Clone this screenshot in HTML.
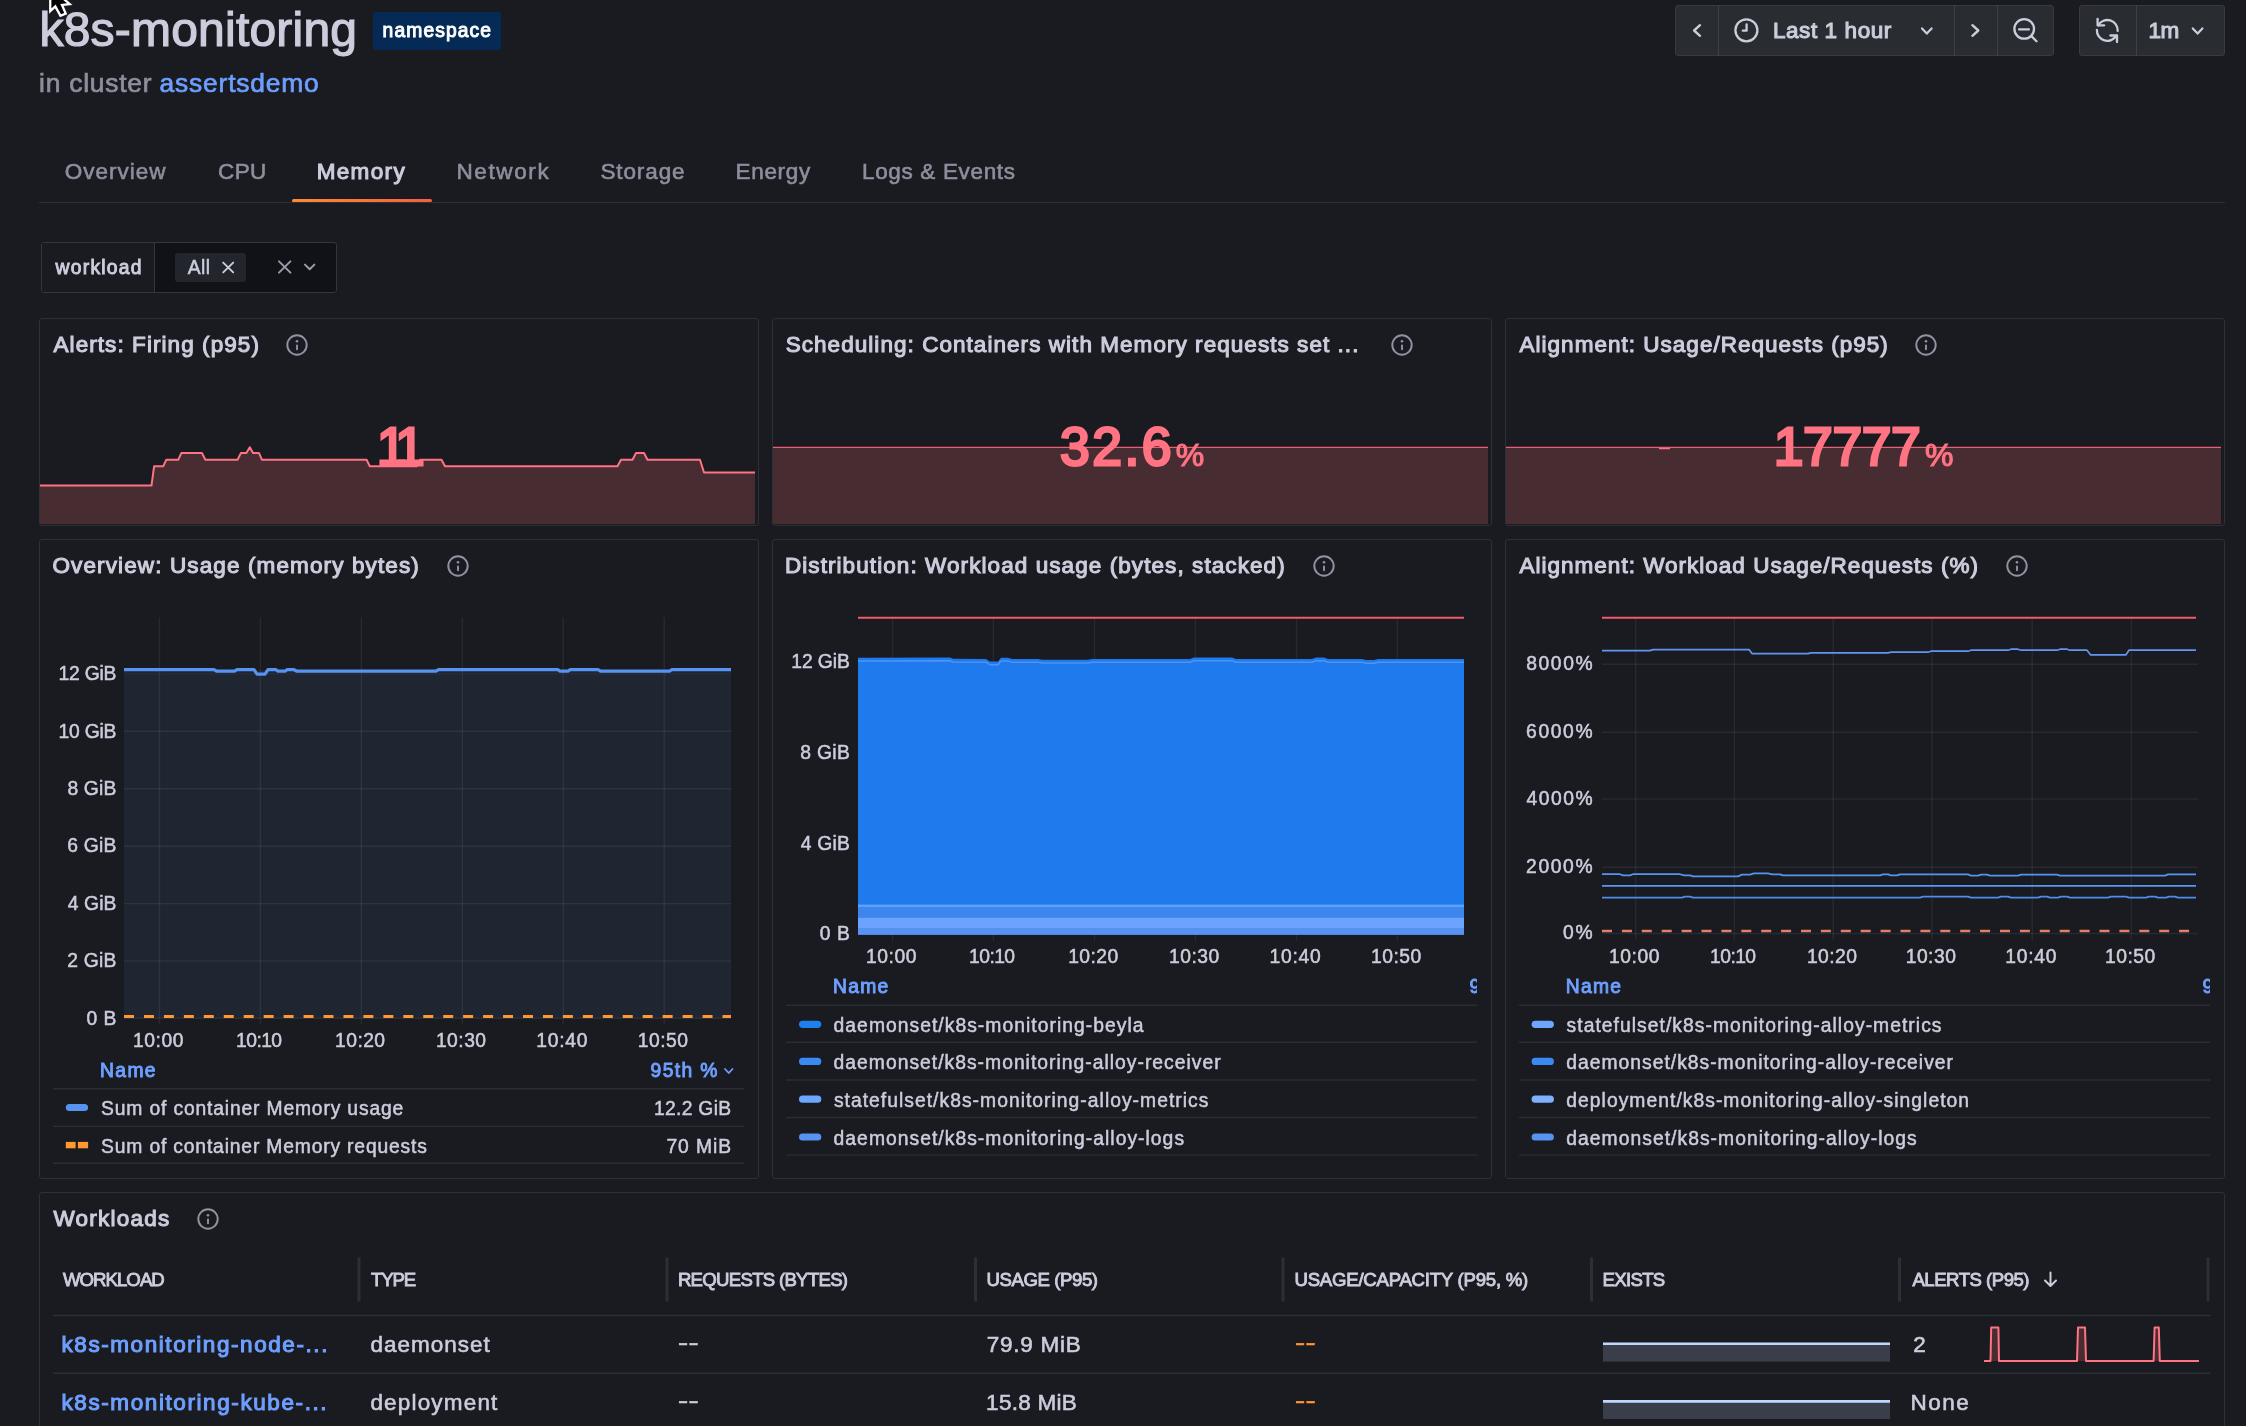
<!DOCTYPE html>
<html lang="en"><head><meta charset="utf-8"><title>k8s-monitoring - Memory</title>
<style>
*{box-sizing:border-box;margin:0;padding:0}
html,body{width:2246px;height:1426px;overflow:hidden;background:#191b20}
body{font-family:"Liberation Sans", sans-serif;color:#ccccdc;position:relative}
#app{position:absolute;left:0;top:0;width:2246px;height:1426px;will-change:transform}
.t{position:absolute;white-space:pre;line-height:1;display:block;-webkit-text-stroke:0.026em currentColor}
.m{-webkit-text-stroke:0.048em currentColor}
.ic{position:absolute;overflow:visible;display:block}
.abs{position:absolute}
.panel{position:absolute;border:1px solid #2e3036;border-radius:3px;background:#191b20;overflow:hidden}
.panel>svg.plot{position:absolute;left:-1px;top:-1px;display:block}
.btn{position:absolute;background:#292c31;border:1px solid #34373d}
a{color:inherit;text-decoration:none}
</style></head>
<body><div id="app">
<header class="abs" style="left:0;top:0;width:2246px;height:120px">
<div class="abs" style="left:373px;top:12px;width:128px;height:38px;border-radius:3px;background:#042a55"></div>
<svg class="ic" style="left:44px;top:0" width="36" height="24" viewBox="44 0 36 24"><path id="cur" d="M51.4 -10.3L51.4 8.5L55.6 4.6L61 14.3L64.2 13L60.3 3.9L67 3.2Z" fill="#000" stroke="#fff" stroke-width="4.6" stroke-linejoin="miter" stroke-miterlimit="6"/><path d="M51.4 -10.3L51.4 8.5L55.6 4.6L61 14.3L64.2 13L60.3 3.9L67 3.2Z" fill="#000"/></svg>
<div class="btn" style="left:1675px;top:5px;width:379px;height:51px;border-radius:3px;background:#292c31;border-color:#373a40"></div>
<div class="abs" style="left:1718px;top:5px;width:1px;height:51px;background:#3d4046"></div>
<div class="abs" style="left:1954px;top:5px;width:1px;height:51px;background:#3d4046"></div>
<div class="abs" style="left:1997px;top:5px;width:1px;height:51px;background:#3d4046"></div>
<div class="btn" style="left:2079px;top:5px;width:146px;height:51px;border-radius:3px;background:#292c31;border-color:#373a40"></div>
<div class="abs" style="left:2136px;top:5px;width:1px;height:51px;background:#3d4046"></div>
<svg class="ic" style="left:1675px;top:5px" width="550" height="51" viewBox="1675 5 550 51" fill="none" stroke="#ccccdc" stroke-width="2.4" stroke-linecap="round" stroke-linejoin="round"><path d="M1700 25.2L1694.1 30.5L1700 35.8"/><path d="M1972.4 25.2L1978.3 30.5L1972.4 35.8"/><circle cx="1746.4" cy="30.3" r="11" stroke-width="2.3"/><path d="M1746.6 24.5V30.7H1742.8" stroke-width="2.3"/><path d="M1922 28.4L1926.8 33.6L1931.6 28.4" stroke-width="2.2"/><circle cx="2024.2" cy="28.9" r="9.8" stroke-width="2.3"/><path d="M2019.1 29.4H2028.9M2031.4 36.1L2036.5 41.2" stroke-width="2.3"/><path d="M2098.3 25.2A10.4 10.4 0 0 1 2117.7 30.9M2096.9 29.9A10.4 10.4 0 0 0 2116.3 35.6" stroke-width="2.3"/><path d="M2097.6 18.8V25.3H2104.2M2110.4 35.5H2117V42" stroke-width="2.3"/><path d="M2192.8 28.4L2197.6 33.6L2202.4 28.4" stroke-width="2.2"/></svg>
<span class="t" style="left:39.5px;top:5.5px;font-size:48px;letter-spacing:0.21px;">k8s-monitoring</span>
<span class="t m" style="left:382.6px;top:20.9px;font-size:19.3px;letter-spacing:1.10px;color:#ffffff;-webkit-text-stroke-width:0.05em;">namespace</span>
<span class="t" style="left:39.1px;top:70.0px;font-size:26.4px;letter-spacing:0.75px;color:#8e8f9d;">in cluster</span>
<span class="t" style="left:159.6px;top:70.0px;font-size:26.4px;letter-spacing:0.80px;color:#6e9fff;">assertsdemo</span>
<span class="t m" style="left:1772.9px;top:20.1px;font-size:22.5px;letter-spacing:0.59px;">Last 1 hour</span>
<span class="t m" style="left:2148.5px;top:20.1px;font-size:22.5px;letter-spacing:-0.49px;">1m</span>
</header>
<nav class="abs" style="left:0;top:140px;width:2246px;height:64px">
<div class="abs" style="left:39px;top:62px;width:2186px;height:1px;background:#2e3036"></div>
<div class="abs" style="left:292px;top:58.5px;width:140px;height:3.5px;border-radius:2px;background:linear-gradient(90deg,#ff8a33,#f55f3e)"></div>
<span class="t" style="left:64.7px;top:21.0px;font-size:22.5px;letter-spacing:1.01px;color:#8e8f9d;">Overview</span>
<span class="t" style="left:218.0px;top:21.0px;font-size:22.5px;letter-spacing:0.43px;color:#8e8f9d;">CPU</span>
<span class="t m" style="left:316.7px;top:21.0px;font-size:22.5px;letter-spacing:1.34px;">Memory</span>
<span class="t" style="left:456.5px;top:21.0px;font-size:22.5px;letter-spacing:1.61px;color:#8e8f9d;">Network</span>
<span class="t" style="left:600.4px;top:21.0px;font-size:22.5px;letter-spacing:0.90px;color:#8e8f9d;">Storage</span>
<span class="t" style="left:735.5px;top:21.0px;font-size:22.5px;letter-spacing:0.69px;color:#8e8f9d;">Energy</span>
<span class="t" style="left:862.0px;top:21.0px;font-size:22.5px;letter-spacing:0.66px;color:#8e8f9d;">Logs &amp; Events</span>
</nav>
<section class="abs" style="left:0;top:230px;width:400px;height:70px">
<div class="abs" style="left:41px;top:12px;width:296px;height:51px;border:1px solid #34363c;border-radius:3px;background:#111217;overflow:hidden"><div style="width:113px;height:49px;background:#191b20;border-right:1px solid #34363c"></div></div>
<div class="abs" style="left:175px;top:23px;width:71px;height:29px;border-radius:3px;background:#22252b"></div>
<span class="t m" style="left:55.6px;top:27.9px;font-size:19.3px;letter-spacing:1.25px;">workload</span>
<span class="t" style="left:187.7px;top:27.7px;font-size:19.3px;letter-spacing:0.47px;">All</span>
<svg class="ic" style="left:215px;top:25px" width="110" height="26" viewBox="215 255 110 26" fill="none" stroke-linecap="round" stroke-linejoin="round"><path d="M223.2 262.6L233.2 272.4M233.2 262.6L223.2 272.4" stroke="#ccccdc" stroke-width="1.9"/><path d="M279 261.4L290.4 272.6M290.4 261.4L279 272.6" stroke="#9b9cab" stroke-width="2"/><path d="M305 264.6L309.7 269.3L314.4 264.6" stroke="#9b9cab" stroke-width="2"/></svg>
</section>
<section class="panel" style="left:39px;top:318px;width:720px;height:208px">
<svg class="plot" width="720" height="208" viewBox="39 318 720 208"><path d="M40 485.5L151.5 485.5L154.1 466.3L163.2 466.3L166.2 459.8L178.2 459.8L181.4 452.9L201.9 452.9L205.4 459.8L237.5 459.8L241 452.9L246.4 452.9L249.8 447.2L253 452.9L258.9 452.9L262 459.8L366.6 459.8L369.8 466.3L416.8 466.3L420 459.8L441.5 459.8L445 466.3L617.5 466.3L621 459.8L632.5 459.8L636 453L644 453L647.5 459.8L700 459.8L704 472.5L755 472.5L755 524L40 524Z" fill="#472c32"/><path d="M40 485.5L151.5 485.5L154.1 466.3L163.2 466.3L166.2 459.8L178.2 459.8L181.4 452.9L201.9 452.9L205.4 459.8L237.5 459.8L241 452.9L246.4 452.9L249.8 447.2L253 452.9L258.9 452.9L262 459.8L366.6 459.8L369.8 466.3L416.8 466.3L420 459.8L441.5 459.8L445 466.3L617.5 466.3L621 459.8L632.5 459.8L636 453L644 453L647.5 459.8L700 459.8L704 472.5L755 472.5" fill="none" stroke="#ff7383" stroke-width="2" stroke-linejoin="round"/></svg>
<svg class="ic" style="left:245.0px;top:14.0px" width="24" height="24" viewBox="-12 -12 24 24"><circle r="9.7" fill="none" stroke="#9192a1" stroke-width="1.95"/><circle cy="-3.7" r="1.3" fill="#9192a1"/><path d="M0 0.4V4.2" stroke="#9192a1" stroke-width="1.95" stroke-linecap="round"/></svg>
<span class="t m" style="left:13.5px;top:15.0px;font-size:22.5px;letter-spacing:1.07px;">Alerts: Firing (p95)</span>
<span class="t" style="left:336.7px;top:101.0px;font-size:53.5px;letter-spacing:-7.45px;color:#ff7383;-webkit-text-stroke-width:0.052em;">11</span>
</section>
<section class="panel" style="left:772px;top:318px;width:720px;height:208px">
<svg class="plot" width="720" height="208" viewBox="772 318 720 208"><rect x="773" y="447.4" width="715" height="76.6" fill="#472c32"/><path d="M773 447.4H1488" stroke="#e95f74" stroke-width="1.3"/></svg>
<svg class="ic" style="left:616.8px;top:14.0px" width="24" height="24" viewBox="-12 -12 24 24"><circle r="9.7" fill="none" stroke="#9192a1" stroke-width="1.95"/><circle cy="-3.7" r="1.3" fill="#9192a1"/><path d="M0 0.4V4.2" stroke="#9192a1" stroke-width="1.95" stroke-linecap="round"/></svg>
<span class="t m" style="left:12.7px;top:15.0px;font-size:22.5px;letter-spacing:1.05px;">Scheduling: Containers with Memory requests set ...</span>
<span class="t" style="left:287.1px;top:101.1px;font-size:53.5px;letter-spacing:2.41px;color:#ff7383;-webkit-text-stroke-width:0.052em;">32.6</span>
<span class="t" style="left:402.7px;top:119.7px;font-size:32px;color:#ff7383;-webkit-text-stroke-width:0.035em;">%</span>
</section>
<section class="panel" style="left:1505px;top:318px;width:720px;height:208px">
<svg class="plot" width="720" height="208" viewBox="1505 318 720 208"><rect x="1506" y="447.4" width="715" height="76.6" fill="#472c32"/><path d="M1506 447.4H2221" stroke="#e95f74" stroke-width="1.3"/><path d="M1659 448.6H1670" stroke="#ff7383" stroke-width="1.4"/></svg>
<svg class="ic" style="left:408.0px;top:14.0px" width="24" height="24" viewBox="-12 -12 24 24"><circle r="9.7" fill="none" stroke="#9192a1" stroke-width="1.95"/><circle cy="-3.7" r="1.3" fill="#9192a1"/><path d="M0 0.4V4.2" stroke="#9192a1" stroke-width="1.95" stroke-linecap="round"/></svg>
<span class="t m" style="left:13.5px;top:15.0px;font-size:22.5px;letter-spacing:1.02px;">Alignment: Usage/Requests (p95)</span>
<span class="t" style="left:267.7px;top:101.1px;font-size:53.5px;letter-spacing:-0.41px;color:#ff7383;-webkit-text-stroke-width:0.052em;">17777</span>
<span class="t" style="left:419.0px;top:119.7px;font-size:32px;color:#ff7383;-webkit-text-stroke-width:0.035em;">%</span>
</section>
<section class="panel" style="left:39px;top:539px;width:720px;height:640px">
<svg class="plot" width="720" height="640" viewBox="39 539 720 640"><rect x="124" y="670" width="607" height="348.6" fill="#1f2531"/><path d="M159.5 617.3V1024.6" stroke="rgba(226,234,246,0.075)" stroke-width="1.4"/><path d="M260.4 617.3V1024.6" stroke="rgba(226,234,246,0.075)" stroke-width="1.4"/><path d="M361.4 617.3V1024.6" stroke="rgba(226,234,246,0.075)" stroke-width="1.4"/><path d="M462.3 617.3V1024.6" stroke="rgba(226,234,246,0.075)" stroke-width="1.4"/><path d="M563.2 617.3V1024.6" stroke="rgba(226,234,246,0.075)" stroke-width="1.4"/><path d="M664.2 617.3V1024.6" stroke="rgba(226,234,246,0.075)" stroke-width="1.4"/><path d="M124 673.9H731" stroke="rgba(226,234,246,0.075)" stroke-width="1.4" opacity="0.5"/><path d="M124 731.3H731" stroke="rgba(226,234,246,0.075)" stroke-width="1.4"/><path d="M124 788.8H731" stroke="rgba(226,234,246,0.075)" stroke-width="1.4"/><path d="M124 846.2H731" stroke="rgba(226,234,246,0.075)" stroke-width="1.4"/><path d="M124 903.6H731" stroke="rgba(226,234,246,0.075)" stroke-width="1.4"/><path d="M124 961.0H731" stroke="rgba(226,234,246,0.075)" stroke-width="1.4"/><path d="M124 1018.3H731" stroke="rgba(226,234,246,0.075)" stroke-width="1.4"/><path d="M124 669.7L214 669.7L216.5 671.2L234.5 671.2L237 669.7L254 669.7L257 674.2L265 674.2L268 669.7L276 669.7L278 671.2L285 671.2L287 669.7L294 669.7L297 671.2L436 671.2L438.5 669.7L558 669.7L560 671.2L568 671.2L570 669.7L598 669.7L600.5 671.2L669.5 671.2L672 669.7L731 669.7" fill="none" stroke="#5794f2" stroke-width="3.2" stroke-linejoin="round"/><path d="M124 1016.5H731" stroke="#ff9830" stroke-width="3.2" stroke-dasharray="10 9.95"/><path d="M53 1088.7H744" stroke="#2a2d33" stroke-width="1.4"/><path d="M53 1126.4H744" stroke="#2a2d33" stroke-width="1.4"/><path d="M53 1163.3H744" stroke="#2a2d33" stroke-width="1.4"/><rect x="65.8" y="1103.9" width="22.3" height="7.2" rx="3.6" fill="#5794f2"/><rect x="65.8" y="1141.8999999999999" width="9.8" height="6.4" fill="#ff9830"/><rect x="77.89999999999999" y="1141.8999999999999" width="10.2" height="6.4" fill="#ff9830"/></svg>
<svg class="ic" style="left:405.5px;top:14.0px" width="24" height="24" viewBox="-12 -12 24 24"><circle r="9.7" fill="none" stroke="#9192a1" stroke-width="1.95"/><circle cy="-3.7" r="1.3" fill="#9192a1"/><path d="M0 0.4V4.2" stroke="#9192a1" stroke-width="1.95" stroke-linecap="round"/></svg><svg class="ic" style="left:680.5px;top:524.5px" width="15.5" height="12.0" viewBox="720.5 1064.5 15.5 12.0"><path d="M724.5 1068.5L728.25 1072.5L732 1068.5" fill="none" stroke="#6e9fff" stroke-width="1.8" stroke-linecap="round" stroke-linejoin="round"/></svg>
<span class="t m" style="left:12.5px;top:15.0px;font-size:22.5px;letter-spacing:1.12px;">Overview: Usage (memory bytes)</span>
<span class="t" style="left:18.6px;top:124.1px;font-size:19.3px;letter-spacing:-0.23px;">12 GiB</span>
<span class="t" style="left:18.6px;top:181.5px;font-size:19.3px;letter-spacing:-0.23px;">10 GiB</span>
<span class="t" style="left:27.4px;top:239.0px;font-size:19.3px;letter-spacing:0.20px;">8 GiB</span>
<span class="t" style="left:27.3px;top:296.4px;font-size:19.3px;letter-spacing:0.23px;">6 GiB</span>
<span class="t" style="left:27.8px;top:353.8px;font-size:19.3px;letter-spacing:0.10px;">4 GiB</span>
<span class="t" style="left:27.3px;top:411.2px;font-size:19.3px;letter-spacing:0.23px;">2 GiB</span>
<span class="t" style="left:46.6px;top:468.5px;font-size:19.3px;letter-spacing:0.45px;">0 B</span>
<span class="t" style="left:92.9px;top:490.7px;font-size:19.3px;letter-spacing:0.58px;">10:00</span>
<span class="t" style="left:196.1px;top:490.7px;font-size:19.3px;letter-spacing:-0.57px;">10:10</span>
<span class="t" style="left:295.1px;top:490.7px;font-size:19.3px;letter-spacing:0.43px;">10:20</span>
<span class="t" style="left:395.9px;top:490.7px;font-size:19.3px;letter-spacing:0.48px;">10:30</span>
<span class="t" style="left:496.3px;top:490.7px;font-size:19.3px;letter-spacing:0.71px;">10:40</span>
<span class="t" style="left:597.8px;top:490.7px;font-size:19.3px;letter-spacing:0.48px;">10:50</span>
<span class="t m" style="left:60.1px;top:520.7px;font-size:19.3px;letter-spacing:1.34px;color:#6e9fff;">Name</span>
<span class="t m" style="left:610.6px;top:520.7px;font-size:19.3px;letter-spacing:1.33px;color:#6e9fff;">95th %</span>
<span class="t" style="left:61.1px;top:558.7px;font-size:19.3px;letter-spacing:0.84px;">Sum of container Memory usage</span>
<span class="t" style="left:613.9px;top:558.7px;font-size:19.3px;letter-spacing:0.32px;">12.2 GiB</span>
<span class="t" style="left:61.1px;top:596.7px;font-size:19.3px;letter-spacing:0.83px;">Sum of container Memory requests</span>
<span class="t" style="left:626.4px;top:596.7px;font-size:19.3px;letter-spacing:0.96px;">70 MiB</span>
</section>
<section class="panel" style="left:772px;top:539px;width:720px;height:640px">
<svg class="plot" width="720" height="640" viewBox="772 539 720 640"><path d="M892.6 618V940.9" stroke="rgba(226,234,246,0.075)" stroke-width="1.4"/><path d="M993.4 618V940.9" stroke="rgba(226,234,246,0.075)" stroke-width="1.4"/><path d="M1094.5 618V940.9" stroke="rgba(226,234,246,0.075)" stroke-width="1.4"/><path d="M1195.4 618V940.9" stroke="rgba(226,234,246,0.075)" stroke-width="1.4"/><path d="M1296.5 618V940.9" stroke="rgba(226,234,246,0.075)" stroke-width="1.4"/><path d="M1397.4 618V940.9" stroke="rgba(226,234,246,0.075)" stroke-width="1.4"/><path transform="translate(0 -0.8)" d="M858 658.6L950 658.4L953 659.6L986 659.8L990 662.4L998 662.4L1001 658.6L1008 658.6L1012 659.8L1038 659.8L1042 660.6L1088 660.6L1092 659.8L1190 659.8L1194 658.4L1232 658.4L1236 659.8L1312 659.8L1316 658.4L1324 658.4L1328 659.8L1362 659.8L1366 660.8L1374 660.8L1378 659.8L1464 659.8L1464 934.9L858 934.9Z" fill="#1f7aee"/><path transform="translate(0 2.4)" d="M858 658.6L950 658.4L953 659.6L986 659.8L990 662.4L998 662.4L1001 658.6L1008 658.6L1012 659.8L1038 659.8L1042 660.6L1088 660.6L1092 659.8L1190 659.8L1194 658.4L1232 658.4L1236 659.8L1312 659.8L1316 658.4L1324 658.4L1328 659.8L1362 659.8L1366 660.8L1374 660.8L1378 659.8L1464 659.8" fill="none" stroke="#4c94f6" stroke-width="1.5"/><rect x="858" y="904.6" width="606" height="2.6" fill="#5fa0f7"/><rect x="858" y="907.1" width="606" height="10.8" fill="#3d86ee"/><rect x="858" y="917.8" width="606" height="10.4" fill="#6ba3ff"/><rect x="858" y="928.1" width="606" height="6.7999999999999545" fill="#5794f2"/><path d="M858 617.8H1464" stroke="#f2596a" stroke-width="2"/><path d="M786 1005.3H1477" stroke="#2a2d33" stroke-width="1.4"/><path d="M786 1042.3H1477" stroke="#2a2d33" stroke-width="1.4"/><path d="M786 1080H1477" stroke="#2a2d33" stroke-width="1.4"/><path d="M786 1117.5H1477" stroke="#2a2d33" stroke-width="1.4"/><path d="M786 1155.1H1477" stroke="#2a2d33" stroke-width="1.4"/><rect x="799" y="1020.6999999999999" width="22.3" height="7.2" rx="3.6" fill="#1f7fee"/><rect x="799" y="1057.8000000000002" width="22.3" height="7.2" rx="3.6" fill="#3a8af3"/><rect x="799" y="1095.6000000000001" width="22.3" height="7.2" rx="3.6" fill="#6ba6ff"/><rect x="799" y="1133.4" width="22.3" height="7.2" rx="3.6" fill="#5794f2"/></svg>
<svg class="ic" style="left:538.5px;top:14.0px" width="24" height="24" viewBox="-12 -12 24 24"><circle r="9.7" fill="none" stroke="#9192a1" stroke-width="1.95"/><circle cy="-3.7" r="1.3" fill="#9192a1"/><path d="M0 0.4V4.2" stroke="#9192a1" stroke-width="1.95" stroke-linecap="round"/></svg>
<span class="t m" style="left:11.9px;top:15.0px;font-size:22.5px;letter-spacing:1.08px;">Distribution: Workload usage (bytes, stacked)</span>
<span class="t" style="left:18.3px;top:112.2px;font-size:19.3px;letter-spacing:-0.09px;">12 GiB</span>
<span class="t" style="left:27.3px;top:202.7px;font-size:19.3px;letter-spacing:0.33px;">8 GiB</span>
<span class="t" style="left:27.7px;top:293.5px;font-size:19.3px;letter-spacing:0.23px;">4 GiB</span>
<span class="t" style="left:46.7px;top:384.1px;font-size:19.3px;letter-spacing:0.60px;">0 B</span>
<span class="t" style="left:93.0px;top:406.7px;font-size:19.3px;letter-spacing:0.58px;">10:00</span>
<span class="t" style="left:196.1px;top:406.7px;font-size:19.3px;letter-spacing:-0.57px;">10:10</span>
<span class="t" style="left:295.2px;top:406.7px;font-size:19.3px;letter-spacing:0.43px;">10:20</span>
<span class="t" style="left:396.0px;top:406.7px;font-size:19.3px;letter-spacing:0.48px;">10:30</span>
<span class="t" style="left:496.6px;top:406.7px;font-size:19.3px;letter-spacing:0.71px;">10:40</span>
<span class="t" style="left:598.0px;top:406.7px;font-size:19.3px;letter-spacing:0.48px;">10:50</span>
<span class="t m" style="left:60.1px;top:437.0px;font-size:19.3px;letter-spacing:1.24px;color:#6e9fff;">Name</span>
<span class="t m" style="left:696.6px;top:437.0px;font-size:19.3px;color:#6e9fff;width:7.6px;overflow:hidden;height:24px;">9</span>
<span class="t" style="left:60.6px;top:475.9px;font-size:19.3px;letter-spacing:1.04px;">daemonset/k8s-monitoring-beyla</span>
<span class="t" style="left:60.6px;top:513.0px;font-size:19.3px;letter-spacing:1.02px;">daemonset/k8s-monitoring-alloy-receiver</span>
<span class="t" style="left:60.9px;top:550.8px;font-size:19.3px;letter-spacing:1.03px;">statefulset/k8s-monitoring-alloy-metrics</span>
<span class="t" style="left:60.6px;top:588.6px;font-size:19.3px;letter-spacing:1.04px;">daemonset/k8s-monitoring-alloy-logs</span>
</section>
<section class="panel" style="left:1505px;top:539px;width:720px;height:640px">
<svg class="plot" width="720" height="640" viewBox="1505 539 720 640"><path d="M1635.6 618V940" stroke="rgba(226,234,246,0.075)" stroke-width="1.4"/><path d="M1734.4 618V940" stroke="rgba(226,234,246,0.075)" stroke-width="1.4"/><path d="M1833.2 618V940" stroke="rgba(226,234,246,0.075)" stroke-width="1.4"/><path d="M1932.1 618V940" stroke="rgba(226,234,246,0.075)" stroke-width="1.4"/><path d="M2032.2 618V940" stroke="rgba(226,234,246,0.075)" stroke-width="1.4"/><path d="M2131.4 618V940" stroke="rgba(226,234,246,0.075)" stroke-width="1.4"/><path d="M1602 664.2H2198" stroke="rgba(226,234,246,0.075)" stroke-width="1.4"/><path d="M1602 732.3H2198" stroke="rgba(226,234,246,0.075)" stroke-width="1.4"/><path d="M1602 799.1H2198" stroke="rgba(226,234,246,0.075)" stroke-width="1.4"/><path d="M1602 867.2H2198" stroke="rgba(226,234,246,0.075)" stroke-width="1.4"/><path d="M1602 933.5H2198" stroke="rgba(226,234,246,0.075)" stroke-width="1.4"/><path d="M1602 650.6L1650 650.6L1653 649.6L1749 649.6L1752 653.6L1808 653.6L1811 652.9L1888 652.9L1891 652.2L1928 652.2L1931 651.2L1968 651.2L1971 650.2L2008 650.2L2011 649.2L2018 649.2L2021 650.2L2057 650.2L2060 649.2L2067 649.2L2070 650.2L2087 650.2L2090.5 654.8L2126 654.8L2129 650.2L2196 650.2" fill="none" stroke="#6096f0" stroke-width="1.7" stroke-linejoin="round"/><path d="M1602 874.2L1620 874.2L1623 875.4L1630 875.4L1633 874.2L1680 874.2L1684 875.4L1690 875.4L1693 876.4L1738 876.4L1742 874.6L1750 874.6L1754 873.4L1768 873.4L1772 874.4L1780 874.4L1783 875.4L1880 875.4L1883 874.4L1888 874.4L1891 875.4L1897 875.4L1900 874.4L1968 874.4L1971 875.6L1978 875.6L1981 874.6L1987 874.6L1990 875.6L2018 875.6L2021 874.6L2057 874.6L2060 875.6L2165 875.6L2168 874.4L2196 874.4" fill="none" stroke="#5794f2" stroke-width="1.7" stroke-linejoin="round"/><path d="M1602 885.8L2196 885.8" fill="none" stroke="#5b98f5" stroke-width="1.7" stroke-linejoin="round"/><path d="M1602 897.6L1682 897.6L1685 896.6L1690 896.6L1693 897.6L1920 897.6L1923 896.6L1968 896.6L1971 897.6L1998 897.6L2001 896.6L2008 896.6L2011 897.6L2038 897.6L2041 896.6L2047 896.6L2050 897.6L2058 897.6L2061 896.6L2067 896.6L2070 897.6L2108 897.6L2111 896.6L2126 896.6L2129 897.6L2146 897.6L2149 896.6L2155 896.6L2158 897.6L2166 897.6L2169 896.6L2175 896.6L2178 897.6L2196 897.6" fill="none" stroke="#4f8cec" stroke-width="1.7" stroke-linejoin="round"/><path d="M1602 617.8H2196" stroke="#f2596a" stroke-width="2"/><path d="M1602 931H2196" stroke="#e47e66" stroke-width="2.5" stroke-dasharray="10 9.9"/><path d="M1519 1005.3H2210" stroke="#2a2d33" stroke-width="1.4"/><path d="M1519 1042.3H2210" stroke="#2a2d33" stroke-width="1.4"/><path d="M1519 1080H2210" stroke="#2a2d33" stroke-width="1.4"/><path d="M1519 1117.5H2210" stroke="#2a2d33" stroke-width="1.4"/><path d="M1519 1155.1H2210" stroke="#2a2d33" stroke-width="1.4"/><rect x="1531.6" y="1020.6999999999999" width="22.3" height="7.2" rx="3.6" fill="#6ea6ff"/><rect x="1531.6" y="1057.8000000000002" width="22.3" height="7.2" rx="3.6" fill="#3a8af3"/><rect x="1531.6" y="1095.6000000000001" width="22.3" height="7.2" rx="3.6" fill="#7eb0ff"/><rect x="1531.6" y="1133.4" width="22.3" height="7.2" rx="3.6" fill="#5794f2"/></svg>
<svg class="ic" style="left:498.5px;top:14.0px" width="24" height="24" viewBox="-12 -12 24 24"><circle r="9.7" fill="none" stroke="#9192a1" stroke-width="1.95"/><circle cy="-3.7" r="1.3" fill="#9192a1"/><path d="M0 0.4V4.2" stroke="#9192a1" stroke-width="1.95" stroke-linecap="round"/></svg>
<span class="t m" style="left:13.5px;top:15.0px;font-size:22.5px;letter-spacing:1.01px;">Alignment: Workload Usage/Requests (%)</span>
<span class="t" style="left:20.2px;top:114.1px;font-size:19.3px;letter-spacing:1.59px;">8000%</span>
<span class="t" style="left:20.1px;top:182.2px;font-size:19.3px;letter-spacing:1.62px;">6000%</span>
<span class="t" style="left:20.6px;top:249.0px;font-size:19.3px;letter-spacing:1.49px;">4000%</span>
<span class="t" style="left:20.1px;top:317.1px;font-size:19.3px;letter-spacing:1.62px;">2000%</span>
<span class="t" style="left:57.0px;top:383.4px;font-size:19.3px;letter-spacing:1.76px;">0%</span>
<span class="t" style="left:103.0px;top:406.7px;font-size:19.3px;letter-spacing:0.58px;">10:00</span>
<span class="t" style="left:204.1px;top:406.7px;font-size:19.3px;letter-spacing:-0.57px;">10:10</span>
<span class="t" style="left:300.9px;top:406.7px;font-size:19.3px;letter-spacing:0.43px;">10:20</span>
<span class="t" style="left:399.7px;top:406.7px;font-size:19.3px;letter-spacing:0.48px;">10:30</span>
<span class="t" style="left:499.3px;top:406.7px;font-size:19.3px;letter-spacing:0.71px;">10:40</span>
<span class="t" style="left:599.0px;top:406.7px;font-size:19.3px;letter-spacing:0.48px;">10:50</span>
<span class="t m" style="left:59.8px;top:437.0px;font-size:19.3px;letter-spacing:1.24px;color:#6e9fff;">Name</span>
<span class="t m" style="left:696.6px;top:437.0px;font-size:19.3px;color:#6e9fff;width:7.6px;overflow:hidden;height:24px;">9</span>
<span class="t" style="left:60.6px;top:475.9px;font-size:19.3px;letter-spacing:1.04px;">statefulset/k8s-monitoring-alloy-metrics</span>
<span class="t" style="left:60.3px;top:513.0px;font-size:19.3px;letter-spacing:1.01px;">daemonset/k8s-monitoring-alloy-receiver</span>
<span class="t" style="left:60.3px;top:550.8px;font-size:19.3px;letter-spacing:1.04px;">deployment/k8s-monitoring-alloy-singleton</span>
<span class="t" style="left:60.3px;top:588.6px;font-size:19.3px;letter-spacing:1.04px;">daemonset/k8s-monitoring-alloy-logs</span>
</section>
<section class="panel" style="left:39px;top:1192px;width:2186px;height:300px">
<svg class="plot" width="2186" height="300" viewBox="39 1192 2186 300"><rect x="357.5" y="1257.5" width="3" height="44" fill="#2c2f35"/><rect x="665.5" y="1257.5" width="3" height="44" fill="#2c2f35"/><rect x="974.0" y="1257.5" width="3" height="44" fill="#2c2f35"/><rect x="1281.5" y="1257.5" width="3" height="44" fill="#2c2f35"/><rect x="1590.0" y="1257.5" width="3" height="44" fill="#2c2f35"/><rect x="1898.0" y="1257.5" width="3" height="44" fill="#2c2f35"/><rect x="2206.5" y="1257.5" width="3" height="44" fill="#2c2f35"/><path d="M53 1315.5H2210.5M53 1373.3H2210.5" stroke="#2c2f35" stroke-width="1.4"/><rect x="1603" y="1343.8" width="287" height="17.799999999999955" fill="#3a3e4a"/><path d="M1603 1343.8H1890" stroke="#c0d8ff" stroke-width="2.6"/><rect x="1603" y="1401.4" width="287" height="17.59999999999991" fill="#3a3e4a"/><path d="M1603 1401.4H1890" stroke="#c0d8ff" stroke-width="2.6"/><path d="M1984 1361L1990.5 1361L1991.2 1327.6L1998.4 1327.6L1999 1361L2077 1361L2078 1327.6L2085 1327.6L2086 1361L2153.6 1361L2154.6 1327.6L2158.8 1327.6L2159.8 1361L2199 1361Z" fill="#472c32"/><path d="M1984 1361L1990.5 1361L1991.2 1327.6L1998.4 1327.6L1999 1361L2077 1361L2078 1327.6L2085 1327.6L2086 1361L2153.6 1361L2154.6 1327.6L2158.8 1327.6L2159.8 1361L2199 1361" fill="none" stroke="#ff7383" stroke-width="2" stroke-linejoin="round"/><path d="M2050.5 1272.5V1285.5M2045 1280.5L2050.5 1286L2056 1280.5" fill="none" stroke="#ccccdc" stroke-width="2" stroke-linecap="round" stroke-linejoin="round"/></svg>
<svg class="ic" style="left:155.5px;top:14.0px" width="24" height="24" viewBox="-12 -12 24 24"><circle r="9.7" fill="none" stroke="#9192a1" stroke-width="1.95"/><circle cy="-3.7" r="1.3" fill="#9192a1"/><path d="M0 0.4V4.2" stroke="#9192a1" stroke-width="1.95" stroke-linecap="round"/></svg>
<span class="t m" style="left:13.5px;top:15.0px;font-size:22.5px;letter-spacing:1.22px;">Workloads</span>
<span class="t m" style="left:22.9px;top:77.8px;font-size:18.6px;letter-spacing:-0.94px;">WORKLOAD</span>
<span class="t m" style="left:331.0px;top:77.8px;font-size:18.6px;letter-spacing:-1.12px;">TYPE</span>
<span class="t m" style="left:637.9px;top:77.8px;font-size:18.6px;letter-spacing:-0.71px;">REQUESTS (BYTES)</span>
<span class="t m" style="left:946.5px;top:77.8px;font-size:18.6px;letter-spacing:-0.42px;">USAGE (P95)</span>
<span class="t m" style="left:1254.5px;top:77.8px;font-size:18.6px;letter-spacing:-0.24px;">USAGE/CAPACITY (P95, %)</span>
<span class="t m" style="left:1562.4px;top:77.8px;font-size:18.6px;letter-spacing:-0.65px;">EXISTS</span>
<span class="t m" style="left:1872.4px;top:77.8px;font-size:18.6px;letter-spacing:-0.50px;">ALERTS (P95)</span>
<span class="t m" style="left:21.5px;top:140.5px;font-size:22.5px;letter-spacing:1.57px;color:#6e9fff;">k8s-monitoring-node-...</span>
<span class="t" style="left:330.4px;top:140.5px;font-size:22.5px;letter-spacing:1.02px;">daemonset</span>
<span class="t" style="left:638.3px;top:140.5px;font-size:22.5px;letter-spacing:0.25px;transform:translateY(-1.7px) scaleX(1.35);transform-origin:0 0;">--</span>
<span class="t" style="left:946.7px;top:140.5px;font-size:22.5px;letter-spacing:0.76px;">79.9 MiB</span>
<span class="t" style="left:1254.8px;top:140.5px;font-size:22.5px;letter-spacing:0.25px;color:#ff9830;transform:translateY(-1.7px) scaleX(1.35);transform-origin:0 0;">--</span>
<span class="t" style="left:1873.2px;top:140.5px;font-size:22.5px;">2</span>
<span class="t m" style="left:21.5px;top:198.5px;font-size:22.5px;letter-spacing:1.59px;color:#6e9fff;">k8s-monitoring-kube-...</span>
<span class="t" style="left:330.4px;top:198.5px;font-size:22.5px;letter-spacing:1.18px;">deployment</span>
<span class="t" style="left:638.3px;top:198.5px;font-size:22.5px;letter-spacing:0.25px;transform:translateY(-1.7px) scaleX(1.35);transform-origin:0 0;">--</span>
<span class="t" style="left:946.1px;top:198.5px;font-size:22.5px;letter-spacing:0.28px;">15.8 MiB</span>
<span class="t" style="left:1254.8px;top:198.5px;font-size:22.5px;letter-spacing:0.25px;color:#ff9830;transform:translateY(-1.7px) scaleX(1.35);transform-origin:0 0;">--</span>
<span class="t" style="left:1870.5px;top:198.5px;font-size:22.5px;letter-spacing:1.45px;">None</span>
</section>
</div></body></html>
